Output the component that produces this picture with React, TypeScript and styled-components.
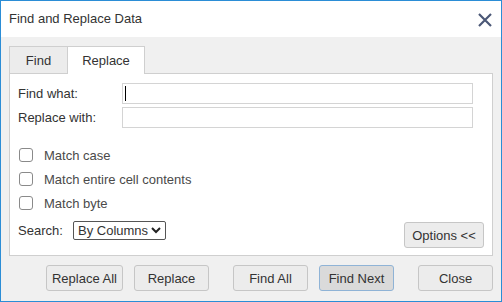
import styled, { createGlobalStyle } from "styled-components";

const GlobalStyle = createGlobalStyle`
  html, body {
    margin: 0;
    padding: 0;
    background: #ffffff;
  }
  * {
    box-sizing: border-box;
  }
`;

const Window = styled.div`
  width: 502px;
  height: 302px;
  border: 1px solid #2b8dd6;
  display: flex;
  flex-direction: column;
  font-family: "Liberation Sans", Arial, sans-serif;
  font-size: 13px;
  color: #333;
  background: #f0f0f0;
`;

const Header = styled.div`
  height: 36px;
  background: #fff;
  display: flex;
  align-items: center;
  justify-content: space-between;
  padding: 0 9px 0 8px;
`;

const Title = styled.span`
  font-size: 13px;
  color: #333;
  margin-top: -1px;
`;

const CloseIcon = styled.svg`
  width: 14px;
  height: 14px;
  margin-top: 1px;
`;

const Body = styled.div`
  flex: 1;
  padding: 9px 8px 0 8px;
  display: flex;
  flex-direction: column;
`;

const Tabs = styled.div`
  display: flex;
  height: 27px;
`;

const Tab = styled.div<{ $active?: boolean }>`
  width: ${(p) => (p.$active ? "78px" : "59px")};
  display: flex;
  align-items: center;
  justify-content: center;
  border: 1px solid #cfcfcf;
  border-bottom: none;
  margin-left: ${(p) => (p.$active ? "-1px" : "0")};
  background: ${(p) => (p.$active ? "#fff" : "#ececec")};
  position: relative;
  z-index: ${(p) => (p.$active ? 1 : 0)};
  height: ${(p) => (p.$active ? "28px" : "27px")};
  padding-bottom: ${(p) => (p.$active ? "1px" : "0")};
`;

const Panel = styled.div`
  height: 183px;
  background: #fff;
  border: 1px solid #cfcfcf;
  padding: 9px 19px 0 8px;
  display: flex;
  flex-direction: column;
`;

const FieldRow = styled.div`
  display: flex;
  align-items: center;
  margin-bottom: 3px;
`;

const FieldLabel = styled.label`
  width: 104px;
  flex-shrink: 0;
`;

const TextInput = styled.div<{ $focused?: boolean }>`
  flex: 1;
  height: 21px;
  border: 1px solid #d4d4d4;
  display: flex;
  align-items: center;
  padding-left: 2px;

  &::before {
    content: "";
    display: ${(p) => (p.$focused ? "block" : "none")};
    width: 1px;
    height: 15px;
    background: #000;
  }
`;

const Options = styled.div`
  margin-top: 12px;
  display: flex;
  flex-direction: column;
`;

const CheckRow = styled.div`
  display: flex;
  align-items: center;
  height: 24px;
`;

const CheckBox = styled.span`
  width: 14px;
  height: 14px;
  border: 1px solid #8a8a8a;
  border-radius: 3px;
  margin-left: 1px;
  margin-right: 11px;
`;

const CheckLabel = styled.span`
  color: #4a4a4a;
`;

const SearchRow = styled.div`
  display: flex;
  align-items: center;
  justify-content: space-between;
  margin-top: 7px;
  margin-right: -11px;
`;

const SearchLeft = styled.div`
  display: flex;
  align-items: center;
  margin-top: -9px;
`;

const SearchLabel = styled.span`
  width: 55px;
`;

const Select = styled.div`
  width: 93px;
  height: 19px;
  border: 1px solid #555;
  border-radius: 2px;
  display: flex;
  align-items: center;
  justify-content: space-between;
  padding: 0 4px 0 4px;
  color: #333;
`;

const Button = styled.button<{ $primary?: boolean; $w?: number }>`
  height: 26px;
  width: ${(p) => p.$w ?? 75}px;
  font-family: "Liberation Sans", Arial, sans-serif;
  font-size: 13px;
  color: #333;
  background: ${(p) => (p.$primary ? "#dadada" : "#ececec")};
  border: 1px solid ${(p) => (p.$primary ? "#8fb3d6" : "#c6c6c6")};
  border-radius: 3px;
  padding: 0;
  cursor: pointer;
`;

const Footer = styled.div`
  display: flex;
  align-items: center;
  padding: 9px 0 0 37px;
`;

const ButtonGroup = styled.div<{ $gap?: number; $ml?: number }>`
  display: flex;
  gap: ${(p) => p.$gap ?? 11}px;
  margin-left: ${(p) => p.$ml ?? 0}px;
`;

export default function App() {
  return (
    <>
      <GlobalStyle />
      <Window>
        <Header>
          <Title>Find and Replace Data</Title>
          <CloseIcon viewBox="0 0 14 14">
            <path
              d="M1 1 L13 13 M13 1 L1 13"
              stroke="#4b5877"
              strokeWidth="2.2"
              fill="none"
            />
          </CloseIcon>
        </Header>
        <Body>
          <Tabs>
            <Tab>Find</Tab>
            <Tab $active>Replace</Tab>
          </Tabs>
          <Panel>
            <FieldRow>
              <FieldLabel>Find what:</FieldLabel>
              <TextInput $focused />
            </FieldRow>
            <FieldRow>
              <FieldLabel>Replace with:</FieldLabel>
              <TextInput />
            </FieldRow>
            <Options>
              <CheckRow>
                <CheckBox />
                <CheckLabel>Match case</CheckLabel>
              </CheckRow>
              <CheckRow>
                <CheckBox />
                <CheckLabel>Match entire cell contents</CheckLabel>
              </CheckRow>
              <CheckRow>
                <CheckBox />
                <CheckLabel>Match byte</CheckLabel>
              </CheckRow>
            </Options>
            <SearchRow>
              <SearchLeft>
                <SearchLabel>Search:</SearchLabel>
                <Select>
                  <span>By Columns</span>
                  <svg width="10" height="7" viewBox="0 0 10 7">
                    <path
                      d="M1 1 L5 5 L9 1"
                      stroke="#222"
                      strokeWidth="2"
                      fill="none"
                    />
                  </svg>
                </Select>
              </SearchLeft>
              <Button $w={80}>Options &lt;&lt;</Button>
            </SearchRow>
          </Panel>
          <Footer>
            <ButtonGroup>
              <Button $w={77}>Replace All</Button>
              <Button $w={75}>Replace</Button>
            </ButtonGroup>
            <ButtonGroup $ml={24}>
              <Button>Find All</Button>
              <Button $primary>Find Next</Button>
            </ButtonGroup>
            <ButtonGroup $ml={24}>
              <Button>Close</Button>
            </ButtonGroup>
          </Footer>
        </Body>
      </Window>
    </>
  );
}
